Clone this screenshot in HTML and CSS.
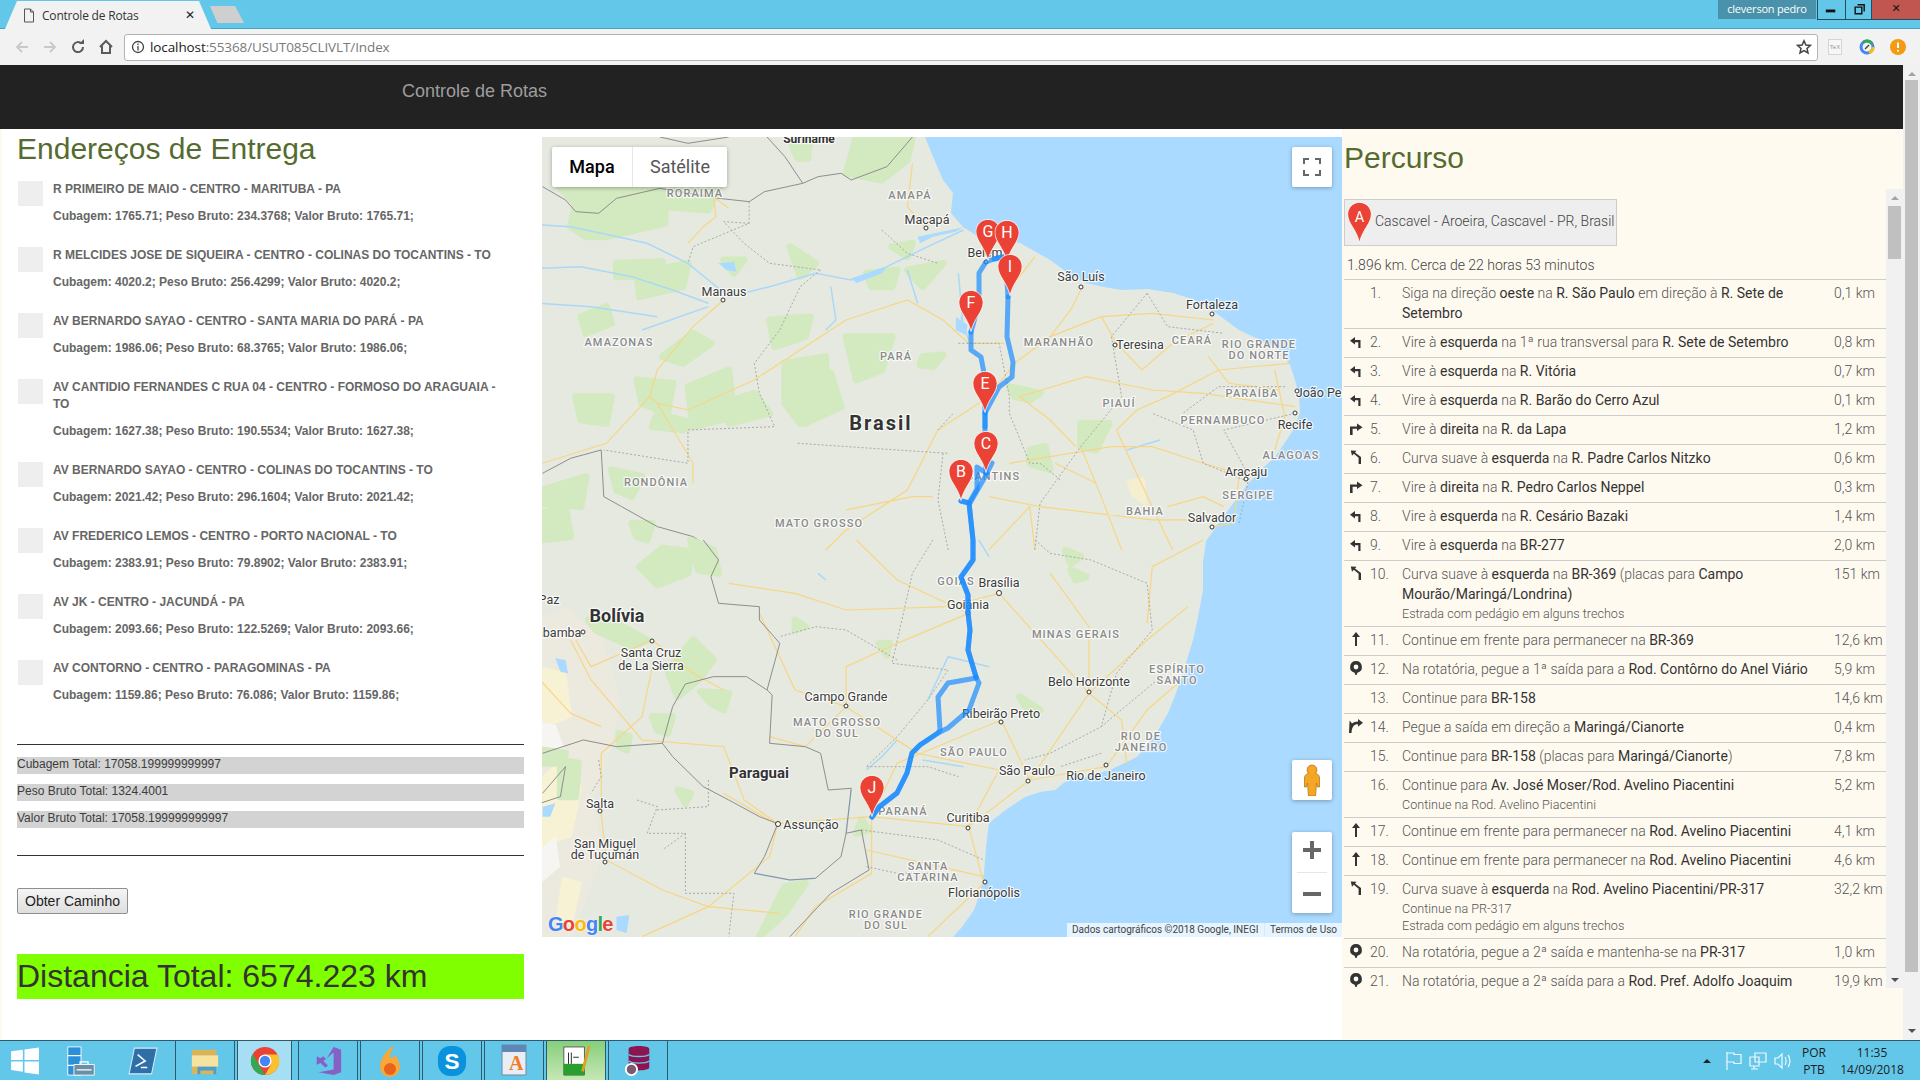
FILE: index.html
```html
<!DOCTYPE html>
<html lang="pt-BR">
<head>
<meta charset="utf-8">
<title>Controle de Rotas</title>
<link rel="stylesheet" href="styles.css">
</head>
<body>
<svg class="defs" width="0" height="0" aria-hidden="true">
  <symbol id="i-left" viewBox="0 0 14 14"><path d="M11.500 14V6H6V3L1 6.800 6 10.500V8.200H9.300V14z"/></symbol>
  <symbol id="i-right" viewBox="0 0 14 14"><path d="M1 14V5.500H8V2.500L13.500 6.200 8 10V7.800H3.600V14z"/></symbol>
  <symbol id="i-slight" viewBox="0 0 14 14"><path d="M12 14H9.600V7.800L4.800 3.700 3 5.800 1.800 .5 7.500 .8 6 2.400 12 7z"/></symbol>
  <symbol id="i-up" viewBox="0 0 14 14"><path d="M6 14V5H3L7 0l4 5H8v9z"/></symbol>
  <symbol id="i-round" viewBox="0 0 14 14"><path fill-rule="evenodd" d="M7 0a6 6 0 0 1 1.400 11.800L7.600 14H6.400L5.600 11.800A6 6 0 0 1 7 0zm0 3.600a2.400 2.400 0 1 0 0 4.800 2.400 2.400 0 0 0 0-4.800z"/></symbol>
  <symbol id="i-ramp" viewBox="0 0 14 14"><path d="M0 14 .6 1.500 3 4.500C5 3 7 2.700 9 2.600V0l5 3.800-5 4V5.200C6 5.300 2.800 6.500 2.500 14z"/></symbol>
  <symbol id="pin" viewBox="0 0 25 42"><path class="pin-shape" d="M12.500.4C5.800.4.400 5.800.400 12.500c0 9.500 8.800 15 12.100 29 3.300-14 12.100-19.500 12.100-29C24.600 5.800 19.200.4 12.500.4z"/></symbol>
</svg>

<header class="titlebar">
  <div class="tab">
    <svg class="tab-doc" viewBox="0 0 12 14"><path d="M1.500.5h6l3 3v10h-9zM7.500.5v3h3"/></svg>
    <span class="tab-title">Controle de Rotas</span>
    <span class="tab-close">✕</span>
  </div>
  <div class="newtab"></div>
  <div class="winbox">
    <div class="winuser">cleverson pedro</div>
    <div class="winbtn"><svg viewBox="0 0 28 20"><rect x="8" y="10" width="10" height="3"/></svg></div>
    <div class="winbtn winbtn-r"><svg viewBox="0 0 26 20"><path class="win-stroke" d="M9.500 7.500h7v7h-7zM12 5h7v7"/></svg></div>
    <div class="winbtn winclose">✕</div>
  </div>
</header>

<nav class="toolbar">
  <svg class="tbicon" viewBox="0 0 16 16"><path class="tb-off" d="M14 8H3M8 3 3 8l5 5"/></svg>
  <svg class="tbicon" viewBox="0 0 16 16"><path class="tb-off" d="M2 8h11M8 3l5 5-5 5"/></svg>
  <svg class="tbicon" viewBox="0 0 16 16"><path class="tb-on" d="M13 8a5 5 0 1 1-1.500-3.500"/><path class="tb-fill" d="M9 5h5V0z"/></svg>
  <svg class="tbicon" viewBox="0 0 16 16"><path class="tb-on" d="M2 8 8 2l6 6M4 7v7h8V7"/></svg>
  <div class="omnibox">
    <svg class="omni-info" viewBox="0 0 14 14"><circle cx="7" cy="7" r="5.500"/><path d="M7 6v4.500M7 3.500v1.500"/></svg>
    <span class="url"><span class="url-host">localhost</span>:55368/USUT085CLIVLT/Index</span>
    <svg class="omni-star" viewBox="0 0 16 16"><path d="m8 1.800 1.900 4.200 4.500.4-3.400 3 1 4.500L8 11.500l-4 2.400 1-4.500-3.400-3 4.500-.4z"/></svg>
  </div>
  <div class="ext ext-tex">TeX</div>
  <svg class="ext" viewBox="0 0 16 16"><circle class="ring-b" cx="8" cy="8" r="6"/><path class="ring-y" d="M14 8a6 6 0 0 1-4 5.700"/><path class="ring-r" d="M4 3.500A6 6 0 0 1 13 4.700"/><path class="ring-n" d="m6 10 4-4"/></svg>
  <svg class="ext" viewBox="0 0 16 16"><circle class="alert-c" cx="8" cy="8" r="8"/><path class="alert-l" d="M8 3.500v5.500M8 11v1.500"/></svg>
</nav>

<div class="navbar"><span class="brand">Controle de Rotas</span></div>

<div class="workspace">
  <main class="page">
    <section class="col-left">
      <h2 class="heading">Endereços de Entrega</h2>
      <ul class="addr-list">
        <li class="addr"><span class="check"></span><div><p class="addr-name">R PRIMEIRO DE MAIO - CENTRO - MARITUBA - PA</p><p class="addr-data">Cubagem: 1765.71; Peso Bruto: 234.3768; Valor Bruto: 1765.71;</p></div></li>
        <li class="addr"><span class="check"></span><div><p class="addr-name">R MELCIDES JOSE DE SIQUEIRA - CENTRO - COLINAS DO TOCANTINS - TO</p><p class="addr-data">Cubagem: 4020.2; Peso Bruto: 256.4299; Valor Bruto: 4020.2;</p></div></li>
        <li class="addr"><span class="check"></span><div><p class="addr-name">AV BERNARDO SAYAO - CENTRO - SANTA MARIA DO PARÁ - PA</p><p class="addr-data">Cubagem: 1986.06; Peso Bruto: 68.3765; Valor Bruto: 1986.06;</p></div></li>
        <li class="addr"><span class="check"></span><div><p class="addr-name">AV CANTIDIO FERNANDES C RUA 04 - CENTRO - FORMOSO DO ARAGUAIA - TO</p><p class="addr-data">Cubagem: 1627.38; Peso Bruto: 190.5534; Valor Bruto: 1627.38;</p></div></li>
        <li class="addr"><span class="check"></span><div><p class="addr-name">AV BERNARDO SAYAO - CENTRO - COLINAS DO TOCANTINS - TO</p><p class="addr-data">Cubagem: 2021.42; Peso Bruto: 296.1604; Valor Bruto: 2021.42;</p></div></li>
        <li class="addr"><span class="check"></span><div><p class="addr-name">AV FREDERICO LEMOS - CENTRO - PORTO NACIONAL - TO</p><p class="addr-data">Cubagem: 2383.91; Peso Bruto: 79.8902; Valor Bruto: 2383.91;</p></div></li>
        <li class="addr"><span class="check"></span><div><p class="addr-name">AV JK - CENTRO - JACUNDÁ - PA</p><p class="addr-data">Cubagem: 2093.66; Peso Bruto: 122.5269; Valor Bruto: 2093.66;</p></div></li>
        <li class="addr"><span class="check"></span><div><p class="addr-name">AV CONTORNO - CENTRO - PARAGOMINAS - PA</p><p class="addr-data">Cubagem: 1159.86; Peso Bruto: 76.086; Valor Bruto: 1159.86;</p></div></li>
      </ul>
      <hr class="rule rule-top">
      <div class="totals">
        <div class="total">Cubagem Total: 17058.199999999997</div>
        <div class="total">Peso Bruto Total: 1324.4001</div>
        <div class="total">Valor Bruto Total: 17058.199999999997</div>
      </div>
      <hr class="rule rule-bottom">
      <button class="btn" type="button">Obter Caminho</button>
      <div class="distance">Distancia Total: 6574.223 km</div>
    </section>

    <section class="col-map">
      <div class="map">
        <svg class="map-svg" viewBox="0 0 800 800">
          <rect class="land" width="800" height="800"/>
          <path class="sea" d="M383 0 392 22 401 43 411 56 409 76 421 90 437 100 460 104 478 106 494 115 508 123 526 136 544 146 562 150 580 153 606 152 631 156 650 162 666 170 682 182 697 193 718 203 738 213 748 228 753 243 757 258 758 276 750 295 733 320 720 332 707 346 690 368 677 386 664 404 661 425 661 453 656 480 651 503 641 536 634 556 626 576 612 600 595 620 570 632 545 640 528 641 513 653 498 655 483 660 465 672 447 686 444 710 442 736 438 756 432 773 420 790 411 800H800V0z"/>
          <path class="patch-andes" d="M0 480 24 470 60 500 78 560 70 610 52 660 60 720 30 800H0z"/>
          <path class="patch-pale" d="M0 530 24 535 30 580 6 590 0 585zM0 640 20 620 40 650 30 700 0 710zM20 740 40 745 30 790 14 780z"/>
          <path class="patch-white" d="M0 585 14 588 22 610 0 622zM0 710 14 700 18 730 0 745z"/>

          <g class="zoomA">
            <path class="patch" d="M40 175 230 170 245 220 245 280 130 320 90 320 60 290 70 220zM240 175 350 175 330 240 250 230zM490 21 530 21 525 70 500 70zM620 21 730 21 720 90 670 150 600 130zM190 430 290 400 280 470 195 500zM360 390 400 390 380 430zM80 560 130 530 140 580 90 610zM720 420 790 400 750 470zM490 350 540 400 510 440zM360 820 420 790 450 850 370 880zM450 570 530 560 520 620 460 650zM480 700 560 680 560 800 510 880 480 820zM510 780 570 730 590 830 520 880zM600 620 690 620 670 720 620 750zM640 430 700 420 690 470 650 470zM290 770 370 720 380 860 300 890zM70 800 140 800 130 880 80 870zM190 750 260 760 250 850 200 820zM300 610 335 640 280 700 240 680zM230 850 300 880 280 900 220 890zM140 1020 200 1040 180 1100 150 1080zM5 1080 90 1040 80 1130 5 1120zM180 1180 220 1180 210 1230 190 1220zM1060 880 1115 880 1090 960 1060 950zM920 770 980 790 960 810 930 800zM960 960 990 950 1000 1020 960 1000zM750 680 790 675 770 710 745 705zM500 60 525 60 525 85 505 85zM150 400 240 395 210 440 150 440zM690 350 730 340 720 380zM0 1150 50 1130 60 1220 0 1230z"/>
            <path class="patch-pale2" d="M1150 1050 1185 1040 1190 1130 1160 1100z"/>
            <path class="river" d="M0 285 60 290 120 310 210 340 290 400 330 450 370 500 450 470 540 430 610 450 680 410 760 350 830 300M570 470 580 570 560 600M720 420 740 520M820 430 830 600M0 415 80 410 180 440 260 480 330 520M0 520 100 530 230 560M200 600 330 530M840 630 825 560M1150 960 1215 930"/>
            <path class="lake" d="M350 400 380 395 385 425 365 420zM815 560 838 585 835 615 815 600zM740 320 830 292 815 305 770 320 745 340zM610 445 680 410 670 430 620 460z"/>
            <path class="road" d="M340 200 345 260 320 290 290 340M360 510 300 590 230 720 215 800 230 820 290 840 420 750 530 640 600 570 720 510 790 570 840 640 910 640M215 800 130 940 5 1000M230 820 300 1000 300 1060M1320 570 1200 550 1100 560 1000 620 930 700 880 800 780 900 720 1080 600 1200 560 1260M1480 830 1300 790 1200 780 1070 740 940 800 1000 870 1050 950M1310 1170 1200 1170 980 1130 880 1100M1390 1040 1300 1000 1200 950 1120 950 1000 980 920 1000M1470 700 1330 720 1230 800 1170 840 1130 900M1320 580 1240 640 1180 720 1130 640 1100 560M1450 780 1350 760 1310 680M1060 480 1040 540 1000 620M1370 1040 1360 1180 1320 1190M770 1100 730 1100 600 1140M880 1260 960 1130 970 1260M1060 950 1100 1100 1140 1260M930 460 970 380M760 300 720 230 730 100M340 200 370 235M1230 1130 1300 1100 1340 1130M1130 900 1160 1000 1240 1260M1440 720 1460 860 1440 960M1010 1000 1090 1060"/>
            <path class="state" d="M410 215 410 280 300 350 290 400M410 280 360 275 400 340 450 400 550 420M550 420 510 470 470 600 420 700 430 790 460 890 290 900 290 1000 125 960M505 940 700 960 800 970M670 300 720 370 780 400M820 640 900 640 920 800 920 850 960 1000 980 1000 1020 1050M780 900 810 850M1190 490 1120 620 1140 800 1060 950 980 1120 970 1260M1380 1050 1300 1000 1280 900 1200 850M1460 770 1330 770 1260 850M1480 850 1340 900 1390 1040 1370 1180M1190 490 1230 590 1340 610M790 970 780 1110 800 1260"/>
            <path class="border" d="M445 21 480 80 515 160 545 140 590 130 610 150 680 110 730 21M5 170 50 210 70 245 115 250 150 205 235 175 350 205 410 215 440 185 515 160M5 1030 60 985 120 960 125 1100 160 1130 230 1190 300 1220 340 1260M235 21 290 40 370 21"/>
          </g>

          <g class="zoomB">
            <path class="patch" d="M195 80 240 25 295 35 290 100 230 135zM295 0 340 30 350 100 310 90zM95 240 150 250 210 300 180 320 110 270zM250 390 300 300 340 360 310 420 270 470zM315 455 370 460 360 510 335 490zM220 530 260 530 250 580 230 570zM430 1190 480 1040 520 1030 480 1120zM5 630 50 640 45 670 5 670zM40 660 75 670 70 770 40 770zM155 580 175 590 170 630 155 620zM940 470 980 510 960 520zM630 840 645 870 620 880zM1030 30 1060 50 1040 70zM665 310 685 310 680 345zM500 240 520 260 500 270zM1040 90 1070 110 1050 120zM270 750 295 760 285 790z"/>
            <path class="river" d="M545 100 560 120M700 600 670 650 640 690M760 480 800 350 880 380M610 750 600 880M420 1000 490 1020 540 1015M750 660 830 680M860 0 880 50"/>
            <path class="lake" d="M30 355 50 360 55 400 40 395zM5 800 30 790 20 830 5 830zM150 1130 175 1125 170 1180 150 1170z"/>
            <path class="road" d="M900 160 800 200 600 210 500 160 370 130M840 220 700 310 600 380 600 500M600 500 500 450 430 220M600 500 740 640 900 690M600 500 520 620 450 590M960 720 1076 460 1190 300 1270 200M1076 460 900 160M1110 680 1190 510 1250 430M960 720 1110 680M904 540 700 670 650 830M904 540 960 720M840 860 960 720M840 860 650 830 470 850M840 860 870 1030 760 1190M650 830 650 1000 540 1100 500 1190M466 851 400 780 360 620 200 600 100 420 60 300M466 851 450 950 330 1100 200 1190M120 820 130 960 240 1050 330 1100 470 1120M220 300 300 400 360 450M220 300 100 380 70 300M220 380 200 530 120 640 120 820M640 930 870 1010M1076 460 1140 540 1150 670M460 850 360 760M0 420 60 520 120 560M1300 0 1200 80 1190 250M620 0 700 120 840 220M1000 100 1076 260 1076 460M900 690 840 860"/>
            <path class="state" d="M770 0 730 100 690 370 800 390 760 480 700 590 640 680M640 680 760 680 820 710M700 360 600 270 540 260 470 290M970 0 1000 40 1080 60 1190 130 1200 270 1130 400 1100 560 1000 640 950 660M1100 560 1210 420M1100 640 1020 680M630 870 780 900 870 960M640 980 700 1000 800 1000M190 780 230 800 210 880 285 880 285 1060 380 1060 370 1190M285 880 240 930M115 660 120 710 100 760M330 720 330 800 230 810"/>
            <path class="border" d="M320 0 350 60 335 110 350 190 430 200 430 240 470 310 445 450 455 465 450 610 520 620 550 640 565 750 610 745 600 880 630 870 645 990 570 1060 490 1190M445 450 405 410 340 410 285 432 260 500 240 610 260 650 320 740 370 780 430 830 466 851 440 950 420 1000 490 1020 540 1015 590 950 600 880M5 640 85 600 150 620 240 610M5 760 50 680 40 770 0 790"/>
          </g>

          <g class="labels">
            <text class="t-bold" x="267" y="2">Suriname</text>
            <text class="t-state" x="153" y="56">RORAIMA</text>
            <text class="t-state" x="368" y="58">AMAPÁ</text>
            <text class="t-city" x="385" y="82">Macapá</text>
            <text class="t-city" x="182" y="154">Manaus</text>
            <text class="t-city" x="443" y="115">Belém</text>
            <text class="t-city" x="539" y="139">São Luís</text>
            <text class="t-city" x="670" y="167">Fortaleza</text>
            <text class="t-state" x="77" y="205">AMAZONAS</text>
            <text class="t-state" x="354" y="219">PARÁ</text>
            <text class="t-state" x="517" y="205">MARANHÃO</text>
            <text class="t-city" x="598" y="207">Teresina</text>
            <text class="t-state" x="650" y="203">CEARÁ</text>
            <text class="t-state" x="717" y="207">RIO GRANDE</text>
            <text class="t-state" x="717" y="218">DO NORTE</text>
            <text class="t-state" x="577" y="266">PIAUÍ</text>
            <text class="t-state" x="710" y="256">PARAÍBA</text>
            <text class="t-city" x="790" y="255">João Pessoa</text>
            <text class="t-state" x="681" y="283">PERNAMBUCO</text>
            <text class="t-city" x="753" y="287">Recife</text>
            <text class="t-big" x="339" y="286">Brasil</text>
            <text class="t-state" x="749" y="318">ALAGOAS</text>
            <text class="t-state" x="443" y="339">TOCANTINS</text>
            <text class="t-state" x="114" y="345">RONDÔNIA</text>
            <text class="t-city" x="704" y="334">Aracaju</text>
            <text class="t-state" x="706" y="358">SERGIPE</text>
            <text class="t-state" x="603" y="374">BAHIA</text>
            <text class="t-city" x="670" y="380">Salvador</text>
            <text class="t-state" x="277" y="386">MATO GROSSO</text>
            <text class="t-state" x="414" y="444">GOIÁS</text>
            <text class="t-city" x="457" y="445">Brasília</text>
            <text class="t-city" x="426" y="467">Goiânia</text>
            <text class="t-city" x="7" y="462">Paz</text>
            <text class="t-country" x="75" y="478">Bolívia</text>
            <text class="t-city" x="10" y="495">chabamba</text>
            <text class="t-city" x="109" y="515">Santa Cruz</text>
            <text class="t-city" x="109" y="528">de La Sierra</text>
            <text class="t-state" x="534" y="497">MINAS GERAIS</text>
            <text class="t-city" x="304" y="559">Campo Grande</text>
            <text class="t-state" x="635" y="532">ESPÍRITO</text>
            <text class="t-state" x="635" y="543">SANTO</text>
            <text class="t-city" x="547" y="544">Belo Horizonte</text>
            <text class="t-city" x="459" y="576">Ribeirão Preto</text>
            <text class="t-state" x="295" y="585">MATO GROSSO</text>
            <text class="t-state" x="295" y="596">DO SUL</text>
            <text class="t-state" x="599" y="599">RIO DE</text>
            <text class="t-state" x="599" y="610">JANEIRO</text>
            <text class="t-state" x="432" y="615">SÃO PAULO</text>
            <text class="t-city" x="485" y="633">São Paulo</text>
            <text class="t-city" x="564" y="638">Rio de Janeiro</text>
            <text class="t-countrysm" x="217" y="636">Paraguai</text>
            <text class="t-state" x="361" y="674">PARANÁ</text>
            <text class="t-city" x="426" y="680">Curitiba</text>
            <text class="t-city" x="58" y="666">Salta</text>
            <text class="t-city" x="269" y="687">Assunção</text>
            <text class="t-city" x="63" y="706">San Miguel</text>
            <text class="t-city" x="63" y="717">de Tucumán</text>
            <text class="t-state" x="386" y="729">SANTA</text>
            <text class="t-state" x="386" y="740">CATARINA</text>
            <text class="t-city" x="442" y="755">Florianópolis</text>
            <text class="t-state" x="344" y="777">RIO GRANDE</text>
            <text class="t-state" x="344" y="788">DO SUL</text>
          </g>
          <g class="dots">
            <circle cx="384" cy="91" r="2"/><circle cx="181" cy="163" r="2"/><circle cx="539" cy="150" r="2"/><circle cx="670" cy="177" r="2"/><circle cx="573" cy="208" r="2"/><circle cx="755" cy="254" r="2"/><circle cx="753" cy="276" r="2"/><circle cx="704" cy="342" r="2"/><circle cx="670" cy="390" r="2"/><circle cx="41" cy="495" r="2"/><circle cx="110" cy="504" r="2"/><circle cx="304" cy="569" r="2"/><circle cx="547" cy="555" r="2"/><circle cx="459" cy="585" r="2"/><circle cx="486" cy="644" r="2"/><circle cx="564" cy="628" r="2"/><circle cx="426" cy="691" r="2"/><circle cx="58" cy="674" r="2"/><circle cx="63" cy="725" r="2"/><circle cx="443" cy="745" r="2"/><circle cx="444" cy="125" r="2"/><circle cx="426" cy="476" r="2"/>
            <circle cx="457" cy="456" r="2.500"/><circle cx="236" cy="687" r="2.500"/>
          </g>

          <g class="routes">
            <path d="M330 680 337 670 355 656 365 636 370 616 378 608 396 596 406 591 427 573 437 546 434 540"/>
            <path d="M330 680 337 670 355 656 365 636 370 616 378 608 396 596 398 593 396 560 406 546 434 541"/>
            <path d="M434 540 426 513 428 493 426 476 426 458 419 440 431 423 431 403 427 366 419 364"/>
            <path d="M434 540 426 513 428 493 426 476 426 458 419 440 431 423 431 403 427 366 435 352 435 330 444 336"/>
            <path d="M419 364 428 366 443 340 450 326 444 336"/>
            <path d="M444 336 443 300 443 276"/>
            <path d="M443 290 443 276 457 250 470 240 471 225 465 200 466 160"/>
            <path d="M443 276 442 236 439 220 429 213 429 195"/>
            <path d="M429 195 437 166 437 136 444 125 452 122 465 119"/>
            <path d="M466 160 464 130 460 120 452 122"/>
          </g>

          <g class="markers">
            <g transform="translate(406.500 322)"><use href="#pin" width="25" height="42"/><text x="12.500" y="12">B</text></g>
            <g transform="translate(431.500 294)"><use href="#pin" width="25" height="42"/><text x="12.500" y="12">C</text></g>
            <g transform="translate(430.500 234)"><use href="#pin" width="25" height="42"/><text x="12.500" y="12">E</text></g>
            <g transform="translate(416.500 153)"><use href="#pin" width="25" height="42"/><text x="12.500" y="12">F</text></g>
            <g transform="translate(433.500 82)"><use href="#pin" width="25" height="42"/><text x="12.500" y="12">G</text></g>
            <g transform="translate(452.500 83)"><use href="#pin" width="25" height="42"/><text x="12.500" y="12">H</text></g>
            <g transform="translate(455.500 117)"><use href="#pin" width="25" height="42"/><text x="12.500" y="12">I</text></g>
            <g transform="translate(317.500 638)"><use href="#pin" width="25" height="42"/><text x="12.500" y="12">J</text></g>
          </g>
        </svg>

        <div class="map-type">
          <span class="map-type-btn map-type-on">Mapa</span>
          <span class="map-type-btn">Satélite</span>
        </div>
        <div class="map-ctl map-full">
          <svg viewBox="0 0 18 18"><path d="M0 6V0h6v2H2v4zM12 0h6v6h-2V2h-4zM18 12v6h-6v-2h4v-4zM6 18H0v-6h2v4h4z"/></svg>
        </div>
        <div class="map-ctl map-peg">
          <svg viewBox="0 0 20 32"><path class="peg" d="M10 1a5 5 0 0 1 3.500 8.500c2.500.5 4 2 4 4.500v9h-2l-1-4-1 13H6.500l-1-13-1 4h-2v-9c0-2.500 1.500-4 4-4.500A5 5 0 0 1 10 1z"/></svg>
        </div>
        <div class="map-ctl map-zoom">
          <svg class="zoom-ic zoom-plus" viewBox="0 0 18 18"><path d="M7 0h4v7h7v4h-7v7H7v-7H0V7h7z"/></svg>
          <span class="zoom-sep"></span>
          <svg class="zoom-ic zoom-minus" viewBox="0 0 18 18"><rect y="7" width="18" height="4"/></svg>
        </div>
        <div class="google"><span class="g-b">G</span><span class="g-r">o</span><span class="g-y">o</span><span class="g-b">g</span><span class="g-g">l</span><span class="g-r">e</span></div>
        <div class="attrib"><span>Dados cartográficos ©2018 Google, INEGI</span><span class="attrib-sep">Termos de Uso</span></div>
      </div>
    </section>

    <aside class="col-right">
      <h2 class="heading heading-r">Percurso</h2>
      <div class="dir-panel">
        <div class="dir-list">
          <div class="waypoint">
            <svg class="way-pin" viewBox="0 0 25 42"><use href="#pin"/><text x="12.500" y="15">A</text></svg>
            <span class="way-text">Cascavel - Aroeira, Cascavel - PR, Brasil</span>
          </div>
          <div class="summary">1.896 km. Cerca de 22 horas 53 minutos</div>
          <div class="row"><span class="r-ic"></span><span class="r-n">1.</span><div class="r-t">Siga na direção <b>oeste</b> na <b>R. São Paulo</b> em direção à <b>R. Sete de Setembro</b></div><span class="r-d">0,1 km</span></div>
          <div class="row"><svg class="r-ic"><use href="#i-left"/></svg><span class="r-n">2.</span><div class="r-t">Vire à <b>esquerda</b> na 1ª rua transversal para <b>R. Sete de Setembro</b></div><span class="r-d">0,8 km</span></div>
          <div class="row"><svg class="r-ic"><use href="#i-left"/></svg><span class="r-n">3.</span><div class="r-t">Vire à <b>esquerda</b> na <b>R. Vitória</b></div><span class="r-d">0,7 km</span></div>
          <div class="row"><svg class="r-ic"><use href="#i-left"/></svg><span class="r-n">4.</span><div class="r-t">Vire à <b>esquerda</b> na <b>R. Barão do Cerro Azul</b></div><span class="r-d">0,1 km</span></div>
          <div class="row"><svg class="r-ic"><use href="#i-right"/></svg><span class="r-n">5.</span><div class="r-t">Vire à <b>direita</b> na <b>R. da Lapa</b></div><span class="r-d">1,2 km</span></div>
          <div class="row"><svg class="r-ic"><use href="#i-slight"/></svg><span class="r-n">6.</span><div class="r-t">Curva suave à <b>esquerda</b> na <b>R. Padre Carlos Nitzko</b></div><span class="r-d">0,6 km</span></div>
          <div class="row"><svg class="r-ic"><use href="#i-right"/></svg><span class="r-n">7.</span><div class="r-t">Vire à <b>direita</b> na <b>R. Pedro Carlos Neppel</b></div><span class="r-d">0,3 km</span></div>
          <div class="row"><svg class="r-ic"><use href="#i-left"/></svg><span class="r-n">8.</span><div class="r-t">Vire à <b>esquerda</b> na <b>R. Cesário Bazaki</b></div><span class="r-d">1,4 km</span></div>
          <div class="row"><svg class="r-ic"><use href="#i-left"/></svg><span class="r-n">9.</span><div class="r-t">Vire à <b>esquerda</b> na <b>BR-277</b></div><span class="r-d">2,0 km</span></div>
          <div class="row"><svg class="r-ic"><use href="#i-slight"/></svg><span class="r-n">10.</span><div class="r-t">Curva suave à <b>esquerda</b> na <b>BR-369</b> (placas para <b>Campo Mourão/Maringá/Londrina)</b><small>Estrada com pedágio em alguns trechos</small></div><span class="r-d">151 km</span></div>
          <div class="row"><svg class="r-ic"><use href="#i-up"/></svg><span class="r-n">11.</span><div class="r-t">Continue em frente para permanecer na <b>BR-369</b></div><span class="r-d">12,6 km</span></div>
          <div class="row"><svg class="r-ic"><use href="#i-round"/></svg><span class="r-n">12.</span><div class="r-t">Na rotatória, pegue a 1ª saída para a <b>Rod. Contôrno do Anel Viário</b></div><span class="r-d">5,9 km</span></div>
          <div class="row"><span class="r-ic"></span><span class="r-n">13.</span><div class="r-t">Continue para <b>BR-158</b></div><span class="r-d">14,6 km</span></div>
          <div class="row"><svg class="r-ic"><use href="#i-ramp"/></svg><span class="r-n">14.</span><div class="r-t">Pegue a saída em direção a <b>Maringá/Cianorte</b></div><span class="r-d">0,4 km</span></div>
          <div class="row"><span class="r-ic"></span><span class="r-n">15.</span><div class="r-t">Continue para <b>BR-158</b> (placas para <b>Maringá/Cianorte</b>)</div><span class="r-d">7,8 km</span></div>
          <div class="row"><span class="r-ic"></span><span class="r-n">16.</span><div class="r-t">Continue para <b>Av. José Moser/Rod. Avelino Piacentini</b><small>Continue na Rod. Avelino Piacentini</small></div><span class="r-d">5,2 km</span></div>
          <div class="row"><svg class="r-ic"><use href="#i-up"/></svg><span class="r-n">17.</span><div class="r-t">Continue em frente para permanecer na <b>Rod. Avelino Piacentini</b></div><span class="r-d">4,1 km</span></div>
          <div class="row"><svg class="r-ic"><use href="#i-up"/></svg><span class="r-n">18.</span><div class="r-t">Continue em frente para permanecer na <b>Rod. Avelino Piacentini</b></div><span class="r-d">4,6 km</span></div>
          <div class="row"><svg class="r-ic"><use href="#i-slight"/></svg><span class="r-n">19.</span><div class="r-t">Curva suave à <b>esquerda</b> na <b>Rod. Avelino Piacentini/PR-317</b><small>Continue na PR-317</small><small>Estrada com pedágio em alguns trechos</small></div><span class="r-d">32,2 km</span></div>
          <div class="row"><svg class="r-ic"><use href="#i-round"/></svg><span class="r-n">20.</span><div class="r-t">Na rotatória, pegue a 2ª saída e mantenha-se na <b>PR-317</b></div><span class="r-d">1,0 km</span></div>
          <div class="row"><svg class="r-ic"><use href="#i-round"/></svg><span class="r-n">21.</span><div class="r-t">Na rotatória, pegue a 2ª saída para a <b>Rod. Pref. Adolfo Joaquim</b></div><span class="r-d">19,9 km</span></div>
        </div>
        <div class="scroll scroll-in"><i class="arr-up"></i><i class="thumb"></i><i class="arr-down"></i></div>
      </div>
    </aside>
  </main>
  <div class="scroll scroll-page"><i class="arr-up"></i><i class="thumb"></i><i class="arr-down"></i></div>
</div>

<footer class="taskbar">
  <div class="task task-plain task-start">
    <svg class="tk" viewBox="0 0 28 28"><path class="w" d="M1 5 12 3.500V13H1zM13.500 3.300 27 1.500V13H13.500zM1 14.500H12V24L1 22.500zM13.500 14.500H27V26.500L13.500 24.700z"/></svg>
  </div>
  <div class="task task-plain task-server">
    <svg class="tk" viewBox="0 0 32 34"><path class="tk-blue" d="M1 1h15v32H1z"/><path class="tk-line" d="M1 11h15M1 22h15"/><path class="tk-case" d="M8 21h23v12H8z"/><path class="tk-line" d="M11 27h17M15 21v-3h9v3"/></svg>
  </div>
  <div class="task task-plain task-ps">
    <svg class="tk" viewBox="0 0 28 28"><path class="tk-ps" d="M6 2h21l-5 24H1z"/><path class="tk-line" d="m9 8 7 6-9 5M12 20h6"/></svg>
  </div>
  <div class="task task-w">
    <svg class="tk" viewBox="0 0 32 32"><path class="tk-fold" d="M2 4h26v26H2z"/><path class="tk-foldf" d="M2 10h28v12H2z"/><path class="tk-foldb" d="M8 22h20v8h-3v-4H11v4H8z"/></svg>
  </div>
  <div class="task task-w task-on task-chrome">
    <svg class="tk" viewBox="0 0 32 32"><circle class="c-r" cx="16" cy="16" r="15"/><path class="c-y" d="M16 9h13.500A15 15 0 0 1 16 31l6.500-11.500z"/><path class="c-g" d="M16 31A15 15 0 0 1 3 8.500L9.500 20z"/><circle class="c-w" cx="16" cy="16" r="7"/><circle class="c-c" cx="16" cy="16" r="5.500"/></svg>
  </div>
  <div class="task task-w">
    <svg class="tk" viewBox="0 0 32 32"><path class="tk-vs" d="M22 1l8 3v24l-8 3-16-3 16-3V7L11 16l5 5-3 2-5-5-4 2V11l4 2 3-2 3 3z"/></svg>
  </div>
  <div class="task task-w">
    <svg class="tk tk-tall" viewBox="0 0 28 34"><path class="tk-fl" d="M18 1c-8 6-14 14-14 22a10 10 0 0 0 20 0c0-5-3-8-4-12-2 2-4 3-6 3 0-4 2-9 4-13z"/><circle class="tk-fl2" cx="14" cy="25" r="6"/></svg>
  </div>
  <div class="task task-w">
    <svg class="tk tk-tall" viewBox="0 0 32 34"><rect class="tk-sk" x="1" y="1" width="30" height="32" rx="13"/><text class="tk-skt" x="16" y="25">S</text></svg>
  </div>
  <div class="task task-w">
    <svg class="tk tk-tall" viewBox="0 0 28 34"><path class="tk-doc" d="M2 1h24v30H2z"/><path class="tk-dochead" d="M2 1h24v7H2z"/><text class="tk-doct" x="9" y="26">A</text></svg>
  </div>
  <div class="task task-w task-active">
    <svg class="tk tk-tall" viewBox="0 0 32 34"><path class="tk-sheet" d="M3 2h22v30H3z"/><path class="tk-sheetg" d="M3 20h22v12H3z"/><path class="tk-pencil" d="m30 1-7 27"/><path class="tk-mini" d="M8 8v12M11 8v12M13 13h6"/></svg>
  </div>
  <div class="task task-w">
    <svg class="tk tk-tall" viewBox="0 0 32 34"><path class="tk-db" d="M6 4c0-4 22-4 22 0v20c0 4-22 4-22 0z"/><path class="tk-dbl" d="M6 10c4 3 18 3 22 0M6 17c4 3 18 3 22 0"/><circle class="tk-gear" cx="9" cy="26" r="6"/></svg>
  </div>
  <div class="tray">
    <span class="tray-up"></span>
    <svg class="tray-ic" viewBox="0 0 18 20"><path d="M2 1v18M2 2h7v1.500h7v9H9V11H2"/></svg>
    <svg class="tray-ic" viewBox="0 0 18 20"><path d="M6 2h11v9H6zM1 6h9v9H1zM5 15v3M2 18h7"/></svg>
    <svg class="tray-ic" viewBox="0 0 18 20"><path d="M2 7h3l4-4v14l-4-4H2zM12 6c1.500 2 1.500 6 0 8M15 4c2.500 3 2.500 9 0 12"/></svg>
    <div class="tray-lang"><span>POR</span><span>PTB</span></div>
    <div class="tray-clock"><span>11:35</span><span>14/09/2018</span></div>
  </div>
</footer>
</body>
</html>
```

FILE: styles.css
```css
* { box-sizing: border-box; }
html, body { margin: 0; padding: 0; }
body {
  width: 1920px; height: 1080px; overflow: hidden;
  display: flex; flex-direction: column;
  font-family: "Liberation Sans", Arial, sans-serif;
  background: #fffaf0; color: #333;
}
.defs { position: absolute; }

/* window title */
.titlebar { height: 29px; flex: none; background: #63c7ea; border-bottom: 1px solid #4aa3c0; display: flex; align-items: flex-end; position: relative; }
.tab { width: 206px; height: 28px; margin-left: 5px; background: #f2f2f2; clip-path: polygon(0 100%, 12px 0, calc(100% - 12px) 0, 100% 100%); display: flex; align-items: center; padding-left: 18px; flex: none; margin-bottom: -1px; }
.tab-doc { width: 12px; height: 15px; fill: none; stroke: #555; stroke-width: 1; margin-right: 7px; flex: none; }
.tab-title { font: 12px "Open Sans", sans-serif; color: #333; width: 143px; white-space: nowrap; letter-spacing: -.2px; flex: none; }
.tab-close { font: 12px "DejaVu Sans", sans-serif; color: #222; }
.newtab { width: 34px; height: 17px; margin: 0 0 5px -1px; background: #cfcfcf; clip-path: polygon(0 0, 74% 0, 100% 100%, 22% 100%); flex: none; }
.winbox { margin-left: auto; align-self: flex-start; display: flex; height: 20px; flex: none; }
.winuser { width: 98px; height: 19px; margin-right: 1px; background: #4a92ab; color: #fff; font: 11px/18px "Open Sans", sans-serif; text-align: center; letter-spacing: -.2px; }
.winbtn { width: 28px; height: 20px; border: 1px solid #1e4e60; border-top: 0; border-right: 0; }
.winbtn svg { width: 100%; height: 100%; display: block; fill: #111; }
.winbtn-r { width: 26px; }
.win-stroke { fill: none; stroke: #111; stroke-width: 1.500; }
.winclose { width: 49px; background: #c0564f; border-right: 0; text-align: center; font: bold 11px/18px "DejaVu Sans", sans-serif; color: #111; }

/* browser toolbar */
.toolbar { height: 36px; flex: none; background: #f2f2f2; display: flex; align-items: center; padding-left: 14px; }
.tbicon { width: 16px; height: 16px; margin-right: 12px; flex: none; fill: none; }
.tb-off { stroke: #c9c9c9; stroke-width: 1.800; fill: none; }
.tb-on { stroke: #5a5a5a; stroke-width: 2; fill: none; }
.tb-fill { fill: #5a5a5a; }
.omnibox { width: 1694px; height: 27px; margin-left: -2px; background: #fff; border: 1px solid #b3b3b3; border-radius: 3px; display: flex; align-items: center; padding-left: 6px; flex: none; }
.omni-info { width: 14px; height: 14px; fill: none; stroke: #444; stroke-width: 1.300; flex: none; margin-right: 5px; }
.url { font: 13.500px "Open Sans", sans-serif; color: #7a7a7a; letter-spacing: -.1px; }
.url-host { color: #222; }
.omni-star { width: 16px; height: 16px; margin-left: auto; margin-right: 5px; fill: none; stroke: #444; stroke-width: 1.500; }
.ext { width: 16px; height: 16px; flex: none; margin-left: 15px; }
.ext-tex { margin-left: 10px; width: 14px; height: 16px; border: 1px solid #d5d5d5; font: 6px/14px "Liberation Sans", sans-serif; color: #999; text-align: center; background: #f7f7f7; margin-right: 2px; }
.ring-b, .ring-y, .ring-r { fill: none; stroke-width: 3; }
.ring-b { stroke: #4285f4; } .ring-y { stroke: #fbbc05; } .ring-r { stroke: #34a853; }
.ring-n { stroke: #444; stroke-width: 1.500; }
.alert-c { fill: #f39c12; }
.alert-l { stroke: #fff; stroke-width: 2; fill: none; }

/* page header */
.navbar { height: 64px; flex: none; background: #222; padding: 15px 0 0 402px; }
.brand { font-size: 18px; line-height: 22px; color: #9d9d9d; }

.workspace { flex: 1; display: flex; min-height: 0; }
.page { flex: 1; display: flex; min-width: 0; }

/* left column */
.col-left { width: 540px; margin-left: 2px; padding: 3px 18px 0 15px; background: #fff; flex: none; }
.heading { margin: 0; font-size: 30px; line-height: 34px; font-weight: 400; color: #556b2f; }
.addr-list { list-style: none; margin: 15px 0 0; padding: 0; }
.addr { display: flex; gap: 10px; margin: 0 0 22px 1px; }
.check { width: 25px; height: 25px; background: #eee; flex: none; }
.addr div { width: 455px; }
.addr p { margin: 0; font-size: 12px; line-height: 17px; font-weight: 700; color: #666; }
.addr-data { margin-top: 10px !important; }
.rule { border: 0; border-top: 1px solid #333; margin: 0; }
.rule-top { margin-top: 40px; }
.totals { display: flex; flex-direction: column; gap: 10px; margin-top: 12px; }
.total { height: 17px; background: #d3d3d3; font-size: 12px; line-height: 15px; color: #3c3c3c; }
.rule-bottom { margin-top: 27px; }
.btn { display: block; margin-top: 32px; width: 111px; height: 26px; padding: 0; font: 14px "Liberation Sans", sans-serif; color: #222; background: linear-gradient(#f5f5f5, #dedede); border: 1px solid #8f8f8f; border-radius: 2px; }
.distance { margin-top: 40px; height: 45px; background: #7fff00; font-size: 32px; line-height: 44px; color: #333; }

/* map */
.col-map { width: 800px; padding-top: 8px; background: #fff; flex: none; }
.map { width: 800px; height: 800px; position: relative; overflow: hidden; background: #e5e9df; }
.map-svg { display: block; width: 800px; height: 800px; }
.land { fill: #e6e9df; }
.sea { fill: #aadaff; }
.patch { fill: #d3e9c0; stroke: #d3e9c0; stroke-width: 7px; stroke-linejoin: round; vector-effect: non-scaling-stroke; }
.patch-andes { fill: #ece9df; }
.patch-pale { fill: #f8f2d4; }
.patch-pale2 { fill: #f5efcf; }
.patch-white { fill: #f6f5f1; }
.zoomA { transform: translate(-2px, -7px) scale(.5102, .3333); }
.zoomB { transform: translate(-2px, 403px) scale(.5102, .3333); }
.river, .road, .state, .border { fill: none; vector-effect: non-scaling-stroke; }
.river { stroke: #aad8f8; stroke-width: 1.500; }
.lake { fill: #aadaff; }
.road { stroke: #f6d684; stroke-width: 1.200; }
.state { stroke: #a9a9a9; stroke-width: 1; stroke-dasharray: 2 2; }
.border { stroke: #8e8e8e; stroke-width: 1; }
.labels text { text-anchor: middle; dominant-baseline: central; font-family: Roboto, sans-serif; paint-order: stroke; stroke: #fff; stroke-opacity: .75; stroke-width: 2.500px; stroke-linejoin: round; }
.t-city { font-size: 12.500px; fill: #3c3c3c; }
.t-state { font-size: 11px; font-weight: 500; fill: #8a8a8a; letter-spacing: 1.100px; }
.t-big { font-size: 20px; font-weight: 700; fill: #333; letter-spacing: 2px; }
.t-country { font-size: 18px; font-weight: 700; fill: #333; }
.t-countrysm { font-size: 15px; font-weight: 700; fill: #333; }
.t-bold { font-size: 12px; font-weight: 700; fill: #333; }
.dots circle { fill: #fff; stroke: #333; stroke-width: 1; }
.routes path { fill: none; stroke: #1a8cff; stroke-opacity: .7; stroke-width: 5; stroke-linejoin: round; stroke-linecap: round; }
.pin-shape { fill: #ea4335; stroke: #fff; stroke-width: .8; }
.markers text { fill: #fff; font: 16px Roboto, sans-serif; text-anchor: middle; dominant-baseline: central; }
.map-type { position: absolute; left: 10px; top: 10px; width: 175px; height: 40px; background: #fff; border-radius: 2px; box-shadow: 0 1px 4px rgba(0,0,0,.3); display: flex; font: 18px/40px Roboto, sans-serif; }
.map-type-btn { color: #565656; text-align: center; flex: 1; }
.map-type-on { color: #000; font-weight: 500; width: 81px; flex: none; border-right: 1px solid #e6e6e6; }
.map-ctl { position: absolute; left: 750px; width: 40px; background: #fff; border-radius: 2px; box-shadow: 0 1px 4px rgba(0,0,0,.3); display: flex; align-items: center; justify-content: center; }
.map-full { top: 10px; height: 40px; }
.map-full svg { width: 18px; height: 18px; fill: #666; }
.map-peg { top: 623px; height: 40px; }
.map-peg svg { width: 20px; height: 32px; }
.peg { fill: #f5a623; stroke: #b5791a; stroke-width: .8; }
.map-zoom { top: 695px; height: 81px; flex-direction: column; justify-content: flex-start; }
.zoom-ic { width: 18px; height: 18px; fill: #666; flex: none; }
.zoom-plus { margin: 9px 0 13px; }
.zoom-minus { margin: 12px 0 10px; }
.zoom-sep { width: 30px; height: 1px; background: #e6e6e6; flex: none; }
.google { position: absolute; left: 6px; top: 775px; font: 700 20px/24px "Liberation Sans", sans-serif; letter-spacing: -.7px; text-shadow: 0 0 2px #fff; }
.g-b { color: #4285f4; } .g-r { color: #ea4335; } .g-y { color: #fbbc05; } .g-g { color: #34a853; }
.attrib { position: absolute; right: 0; bottom: 0; width: 275px; height: 14px; background: rgba(255,255,255,.7); font: 10px/14px Roboto, sans-serif; color: #444; display: flex; justify-content: space-between; padding: 0 5px 0 5px; }
.attrib-sep { border-left: 1px solid #d8e8f4; padding-left: 5px; }

/* directions */
.col-right { flex: 1; min-width: 0; padding-top: 12px; }
.heading-r { padding-left: 2px; }
.dir-panel { margin-top: 14px; height: 799px; display: flex; overflow: hidden; }
.dir-list { flex: 1; min-width: 0; padding: 10px 0 0 2px; font-family: Roboto, sans-serif; font-size: 14px; font-weight: 300; color: #555; }
.waypoint { width: 273px; height: 47px; background: #eee; border: 1px solid #cdcdcd; display: flex; align-items: center; padding-left: 2px; gap: 3px; font-size: 14px; color: #444; white-space: nowrap; }
.way-text { padding-bottom: 3px; }
.way-pin { width: 25px; height: 41px; flex: none; }
.way-pin text { fill: #fff; font: 15px Roboto, sans-serif; text-anchor: middle; dominant-baseline: central; }
.summary { height: 33px; line-height: 38px; padding-left: 3px; color: #444; }
.row { display: flex; border-top: 1px solid #cdcdcd; padding: 3px 0 5px 5px; line-height: 20px; color: #555; }
.r-ic { width: 14px; height: 14px; margin: 2px 7px 0 0; flex: none; fill: #333; display: block; }
.r-n { width: 32px; flex: none; }
.r-t { width: 432px; flex: none; padding-right: 8px; }
.r-t b { font-weight: 400; color: #333; }
.r-t small { display: block; font-size: 12.600px; line-height: 19px; margin-bottom: -2px; }
.r-d { white-space: nowrap; }

/* scrollbars */
.scroll { width: 17px; flex: none; background: #f1f1f1; display: flex; flex-direction: column; align-items: center; }
.scroll i { display: block; flex: none; }
.arr-up { width: 0; height: 0; border: 4px solid transparent; border-top: 0; border-bottom: 4px solid #a3a3a3; }
.arr-down { width: 0; height: 0; border: 4px solid transparent; border-bottom: 0; border-top: 4px solid #505050; margin-top: auto; }
.thumb { width: 13px; background: #c0c0c0; }
.scroll-in { padding: 7px 0 6px; }
.scroll-in .arr-up { margin-bottom: 6px; }
.scroll-in .thumb { height: 53px; }
.scroll-page { padding: 7px 0 7px; margin-top: -64px; }
.scroll-page .arr-up { margin-bottom: 4px; }
.scroll-page .thumb { height: 892px; }

/* taskbar */
.taskbar { height: 40px; flex: none; background: #63c7ea; border-top: 1px solid #2f5a6b; display: flex; align-items: stretch; position: relative; z-index: 2; }
.task { display: flex; align-items: center; justify-content: center; flex: none; }
.task-plain { border: 0; }
.task-start { width: 50px; }
.task-server { width: 61px; }
.task-ps { width: 64px; }
.task-w { width: 60px; border-left: 1px solid #2f5a6b; border-right: 1px solid #2f5a6b; margin-right: 2px; }
.task-chrome { width: 55px; margin-right: 6px; }
.task-on { background: #a6def4; }
.task-active { background: linear-gradient(#86cf7a, #c5e8b5); }
.tk { width: 30px; height: 30px; }
.tk-tall { height: 34px; }
.w { fill: #fff; }
.tk-blue { fill: #2a90d8; stroke: #fff; stroke-width: 1; }
.tk-line { stroke: #fff; stroke-width: 1.500; fill: none; }
.tk-case { fill: #6b8fa5; stroke: #fff; stroke-width: 1; }
.tk-ps { fill: #2f6fa8; stroke: #cfe9f7; stroke-width: 1; }
.tk-fold { fill: #d9b45b; }
.tk-foldf { fill: #f6e3a0; }
.tk-foldb { fill: #4b9fd0; }
.c-r { fill: #ea4335; }
.c-y { fill: #fbc02d; }
.c-g { fill: #34a853; }
.c-w { fill: #fff; }
.c-c { fill: #4285f4; }
.tk-vs { fill: #8661c5; }
.tk-fl { fill: #f7a83a; }
.tk-fl2 { fill: #e8641b; }
.tk-sk { fill: #0a92dd; }
.tk-skt { fill: #fff; font: 700 24px "Liberation Sans", sans-serif; text-anchor: middle; }
.tk-doc { fill: #e9eef4; stroke: #6d88a5; stroke-width: 1; }
.tk-dochead { fill: #5f86b5; }
.tk-doct { fill: #ef7d22; font: 700 20px "Liberation Serif", serif; }
.tk-sheet { fill: #fff; stroke: #555; stroke-width: 1; }
.tk-sheetg { fill: #29a02d; }
.tk-pencil { stroke: #e0a020; stroke-width: 3; fill: none; }
.tk-mini { stroke: #222; stroke-width: 1; fill: none; }
.tk-db { fill: #8c1450; }
.tk-dbl { stroke: #63c7ea; stroke-width: 1.500; fill: none; }
.tk-gear { fill: #7a5a6e; stroke: #fff; stroke-width: 2; }
.tray { margin-left: auto; display: flex; align-items: center; padding-right: 17px; color: #1c1c1c; font: 12px/17px "Open Sans", sans-serif; }
.tray-up { width: 0; height: 0; border: 4px solid transparent; border-top: 0; border-bottom: 4px solid #222; margin-right: 14px; }
.tray-ic { width: 18px; height: 20px; margin-right: 6px; fill: none; stroke: #f2f8fb; stroke-width: 1.200; }
.tray-lang { display: flex; flex-direction: column; align-items: center; margin: 0 15px 0 5px; }
.tray-clock { display: flex; flex-direction: column; align-items: center; width: 62px; }
```
